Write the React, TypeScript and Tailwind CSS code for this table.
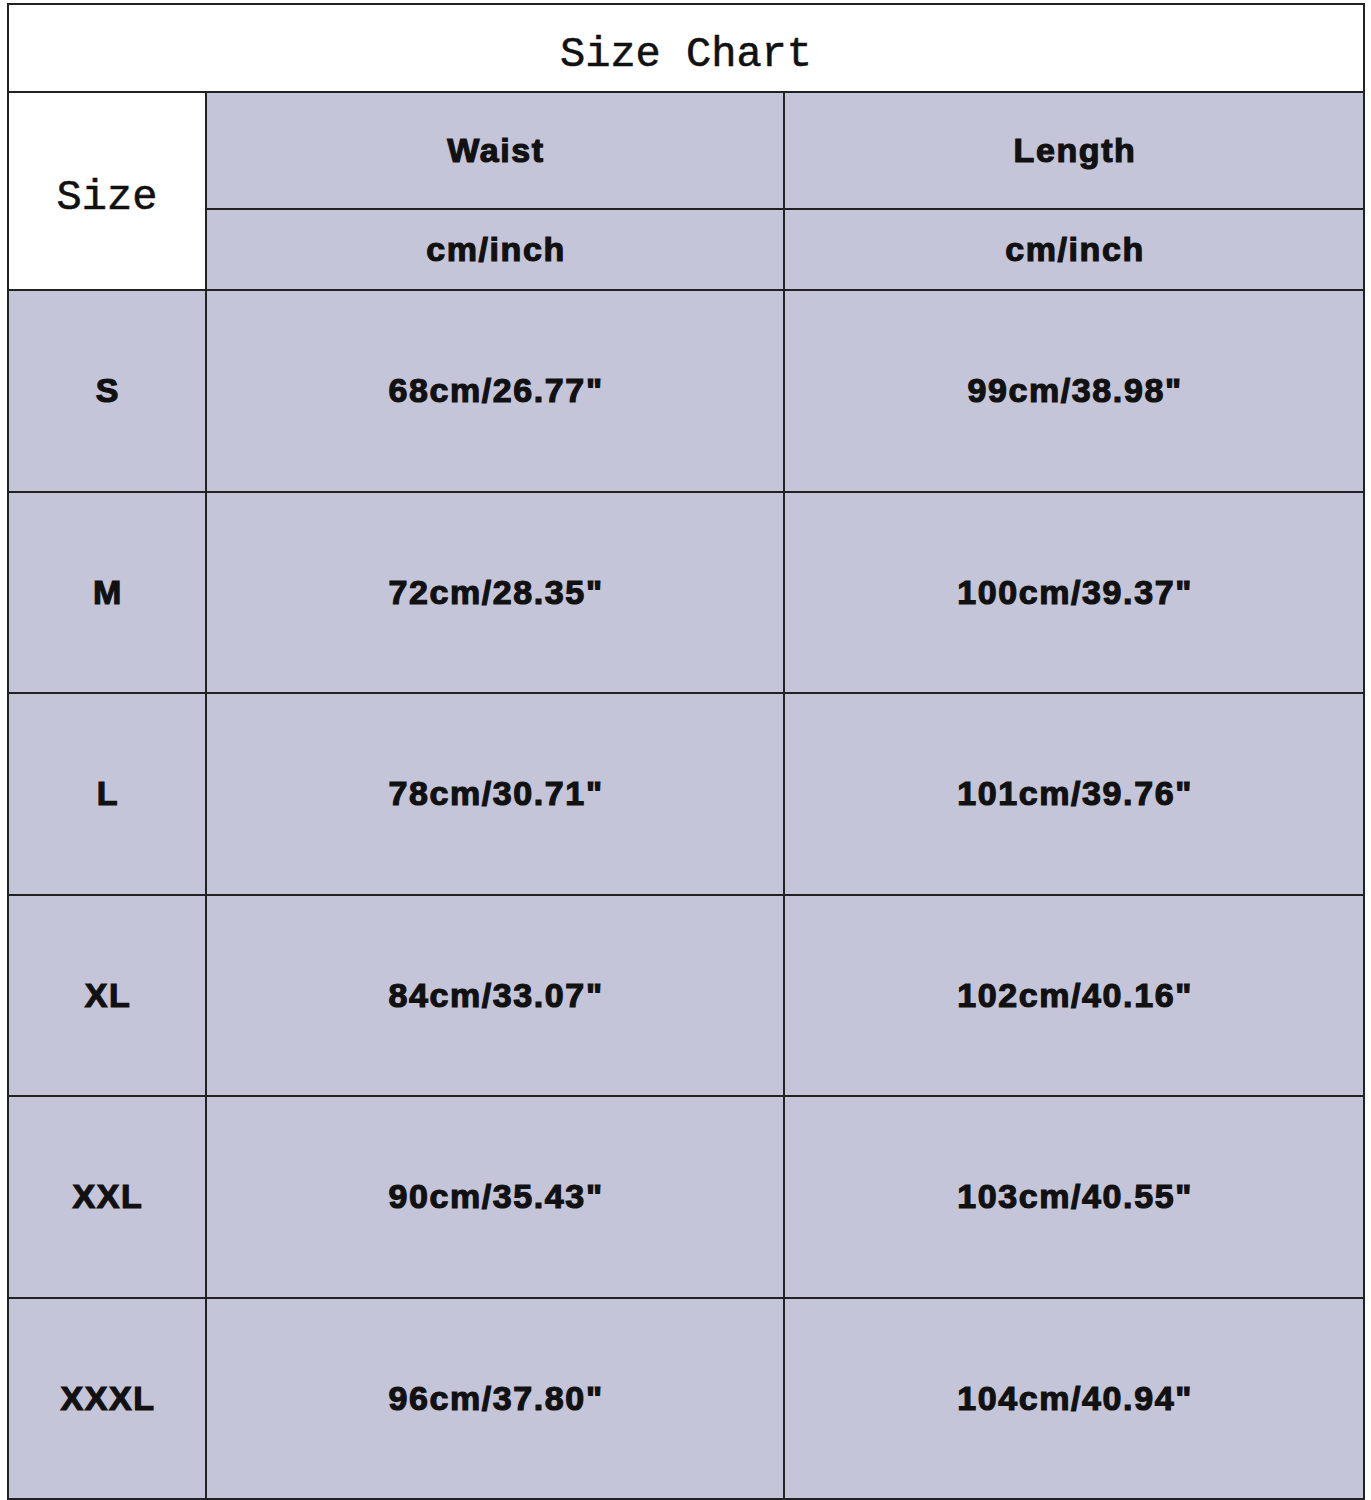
const rows = [
  { size: "S", waist: '68cm/26.77"', length: '99cm/38.98"' },
  { size: "M", waist: '72cm/28.35"', length: '100cm/39.37"' },
  { size: "L", waist: '78cm/30.71"', length: '101cm/39.76"' },
  { size: "XL", waist: '84cm/33.07"', length: '102cm/40.16"' },
  { size: "XXL", waist: '90cm/35.43"', length: '103cm/40.55"' },
  { size: "XXXL", waist: '96cm/37.80"', length: '104cm/40.94"' },
]

const bold =
  "pl-[2px] text-center align-middle font-['Liberation_Sans',Arial,sans-serif] font-bold text-[34px] tracking-[1.6px] text-[#111] [-webkit-text-stroke:1.2px_#111]"

const serif =
  "border-2 border-[#222] bg-white pt-[14px] text-center align-middle font-['Liberation_Mono','Courier_New',monospace] text-[42px] text-[#111] [-webkit-text-stroke:0.6px_#111]"

export default function App() {
  return (
    <div className="min-h-[1500px] bg-white pl-[7px] pt-[3px]">
      <table className="w-[1356px] table-fixed border-collapse border-2 border-[#222]">
        <colgroup>
          <col className="w-[198px]" />
          <col className="w-[578px]" />
          <col className="w-[580px]" />
        </colgroup>
        <tbody>
          <tr>
            <td colSpan={3} className={`h-[88px] ${serif}`}>
              Size Chart
            </td>
          </tr>
          <tr>
            <td rowSpan={2} className={serif}>
              Size
            </td>
            <td className={`h-[117px] border-2 border-[#222] bg-[#c5c5d9] ${bold}`}>Waist</td>
            <td className={`h-[117px] border-2 border-[#222] bg-[#c5c5d9] ${bold}`}>Length</td>
          </tr>
          <tr>
            <td className={`h-[81px] border-2 border-[#222] bg-[#c5c5d9] ${bold}`}>cm/inch</td>
            <td className={`h-[81px] border-2 border-[#222] bg-[#c5c5d9] ${bold}`}>cm/inch</td>
          </tr>
          {rows.map((r) => (
            <tr key={r.size}>
              <td className={`h-[201.5px] border-2 border-[#222] bg-[#c5c5d9] ${bold}`}>{r.size}</td>
              <td className={`h-[201.5px] border-2 border-[#222] bg-[#c5c5d9] ${bold}`}>{r.waist}</td>
              <td className={`h-[201.5px] border-2 border-[#222] bg-[#c5c5d9] ${bold}`}>{r.length}</td>
            </tr>
          ))}
        </tbody>
      </table>
    </div>
  )
}
